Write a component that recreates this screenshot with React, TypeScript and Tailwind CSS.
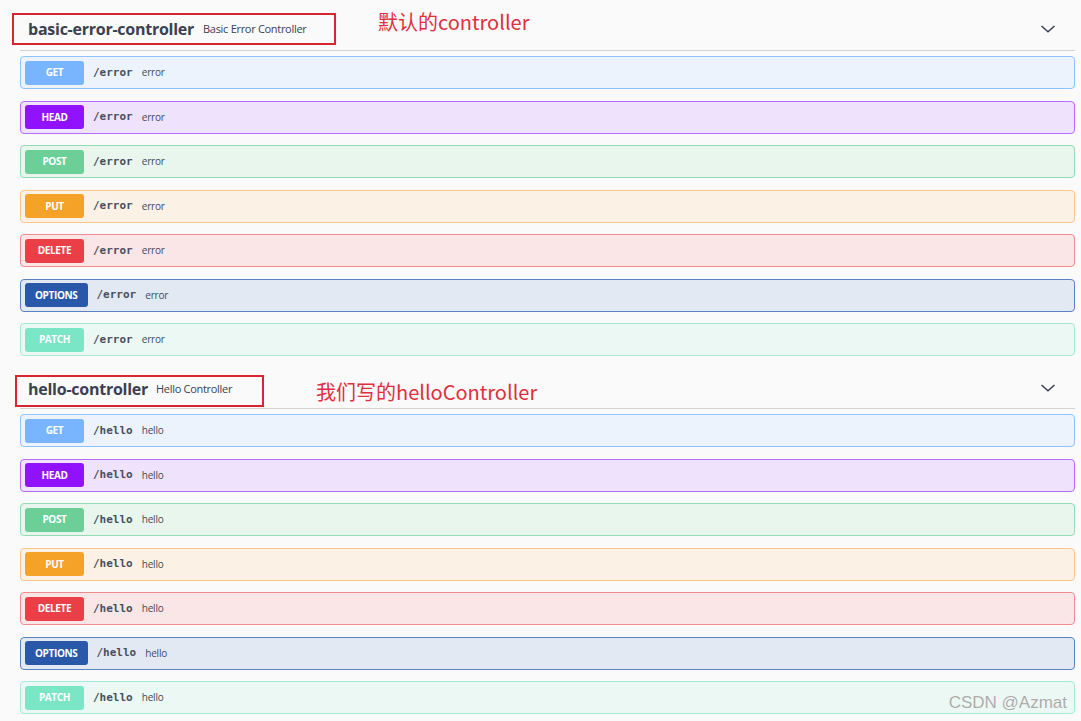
import React from "react";

type Method = {
  name: string;
  badge: string;
  bg: string;
  border: string;
};

const methods: Method[] = [
  { name: "GET", badge: "bg-[#78b5fe]", bg: "bg-[#ecf3fc]", border: "border-[#8fc2fe]" },
  { name: "HEAD", badge: "bg-[#9012fe]", bg: "bg-[#efe2fc]", border: "border-[#b66cfe]" },
  { name: "POST", badge: "bg-[#6ccf98]", bg: "bg-[#e8f6ee]", border: "border-[#93dbb5]" },
  { name: "PUT", badge: "bg-[#f5a228]", bg: "bg-[#fbf1e5]", border: "border-[#f7c78a]" },
  { name: "DELETE", badge: "bg-[#ea3f47]", bg: "bg-[#fae6e6]", border: "border-[#ef8b8d]" },
  { name: "OPTIONS", badge: "bg-[#2a58a8]", bg: "bg-[#e3e9f2]", border: "border-[#5a82c2]" },
  { name: "PATCH", badge: "bg-[#7ae6c6]", bg: "bg-[#ebf8f4]", border: "border-[#a3ebd6]" },
];

const sans = { fontFamily: "'Open Sans', 'Noto Sans', sans-serif" };

function Row({ m, path, summary }: { m: Method; path: string; summary: string }) {
  return (
    <div
      className={`flex items-center h-[33px] rounded-[4px] border ${m.bg} ${m.border} pl-[4px] gap-[9px]`}
    >
      <div
        className={`h-[24px] min-w-[59px] px-[10px] rounded-[3px] flex items-center justify-center text-white font-bold text-[10px] tracking-[-0.35px] ${m.badge}`}
        style={sans}
      >
        {m.name}
      </div>
      <span
        className="text-[11px] font-bold text-[#4a4f5c] pt-[1px]"
        style={{ fontFamily: "'DejaVu Sans Mono', 'Liberation Mono', monospace" }}
      >
        {path}
      </span>
      <span className="text-[10px] text-[#444a58] tracking-[-0.2px]" style={sans}>
        {summary}
      </span>
    </div>
  );
}

function Chevron() {
  return (
    <svg width="20" height="20" viewBox="0 0 20 20" className="text-[#3b4151]">
      <path d="M3.5 7 L10 12.8 L16.5 7" fill="none" stroke="currentColor" strokeWidth="1.5" />
    </svg>
  );
}

export default function App() {
  const cjk = { fontFamily: "'Noto Sans CJK SC', 'Noto Sans', sans-serif" };
  return (
    <div className="w-[1081px] h-[721px] bg-[#fafafa] overflow-hidden relative pl-[20px] pr-[6px]">
      {/* Section 1 */}
      <div className="h-[51px] border-b border-[#d3d3d3] flex items-start">
        <div className="mt-[13px] ml-[-8px] w-[324px] h-[32px] border-2 border-[#d8262f] flex items-center pl-[14px] gap-[9px]">
          <span className="text-[16px] font-bold text-[#3b4151] tracking-[-0.25px]" style={sans}>
            basic-error-controller
          </span>
          <span className="text-[11px] text-[#3b4151] tracking-[-0.3px]" style={sans}>
            Basic Error Controller
          </span>
        </div>
        <div className="mt-[8px] ml-[42px] text-[20px] leading-[28px] text-[#e02f3c]" style={cjk}>
          默认的controller
        </div>
        <div className="ml-auto mt-[19px] mr-[17px]">
          <Chevron />
        </div>
      </div>
      <div className="mt-[5px] flex flex-col gap-[11.5px]">
        {methods.map((m) => (
          <Row key={m.name} m={m} path="/error" summary="error" />
        ))}
      </div>

      {/* Section 2 */}
      <div className="h-[53px] border-b border-[#d3d3d3] flex items-start">
        <div className="mt-[19px] ml-[-5px] w-[249px] h-[32px] border-2 border-[#d8262f] flex items-center pl-[11px] pb-[4px] gap-[8px]">
          <span className="text-[16px] font-bold text-[#3b4151] tracking-[-0.25px]" style={sans}>
            hello-controller
          </span>
          <span className="text-[11px] text-[#3b4151] tracking-[-0.3px]" style={sans}>
            Hello Controller
          </span>
        </div>
        <div className="mt-[22px] ml-[52px] text-[20px] leading-[28px] text-[#e02f3c]" style={cjk}>
          我们写的helloController
        </div>
        <div className="ml-auto mt-[22px] mr-[17px]">
          <Chevron />
        </div>
      </div>
      <div className="mt-[5px] flex flex-col gap-[11.5px]">
        {methods.map((m) => (
          <Row key={m.name} m={m} path="/hello" summary="hello" />
        ))}
      </div>

      <div
        className="absolute right-[14px] bottom-[6px] text-[17px] text-[#ababab]"
        style={{
          fontFamily: "'Liberation Sans', Arial, sans-serif",
          textShadow: "0 0 1px #ffffff",
        }}
      >
        CSDN @Azmat
      </div>
    </div>
  );
}
